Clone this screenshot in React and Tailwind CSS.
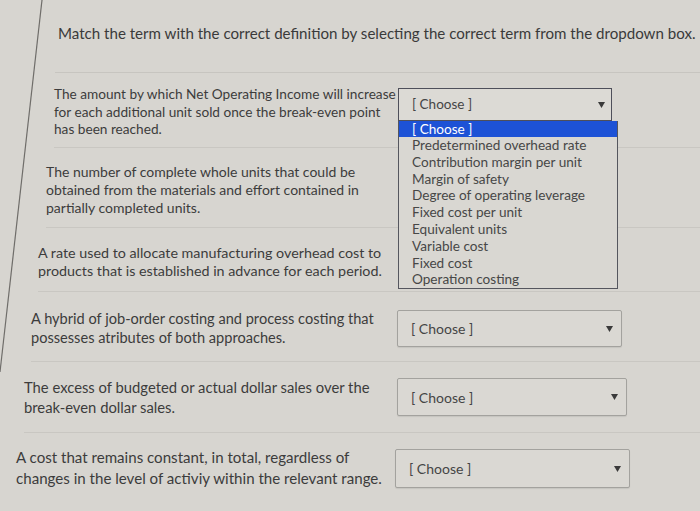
import React from "react";

const options = [
  "Predetermined overhead rate",
  "Contribution margin per unit",
  "Margin of safety",
  "Degree of operating leverage",
  "Fixed cost per unit",
  "Equivalent units",
  "Variable cost",
  "Fixed cost",
  "Operation costing",
];

const rows = [
  {
    lines: [
      "The amount by which Net Operating Income will increase",
      "for each additional unit sold once the break-even point",
      "has been reached.",
    ],
    ml: "ml-[54px]",
    h: "h-[75px]",
    pt: "pt-[13px]",
    tw: "w-[344px]",
    lead: "leading-[17.5px] text-[13.65px]",
    dd: "mt-[15px] w-[214px] h-[33px]",
    open: true,
  },
  {
    lines: [
      "The number of complete whole units that could be",
      "obtained from the materials and effort contained in",
      "partially completed units.",
    ],
    ml: "ml-[46px]",
    h: "h-[80px]",
    pt: "pt-[15px]",
    tw: "w-[352px]",
    lead: "leading-[18px] text-[14px]",
    hidden: true,
  },
  {
    lines: [
      "A rate used to allocate manufacturing overhead cost to",
      "products that is established in advance for each period.",
    ],
    ml: "ml-[38px]",
    h: "h-[64px]",
    pt: "pt-[16px]",
    tw: "w-[360px]",
    lead: "leading-[18px] text-[14.3px]",
    hidden: true,
  },
  {
    lines: [
      "A hybrid of job-order costing and process costing that",
      "possesses atributes of both approaches.",
    ],
    ml: "ml-[31px]",
    h: "h-[70px]",
    pt: "pt-[17px]",
    tw: "w-[366px]",
    lead: "leading-[19px] text-[14.6px]",
    dd: "mt-[18px] w-[225px] h-[37px]",
  },
  {
    lines: [
      "The excess of budgeted or actual dollar sales over the",
      "break-even dollar sales.",
    ],
    ml: "ml-[24px]",
    h: "h-[71px]",
    pt: "pt-[15px]",
    tw: "w-[373px]",
    lead: "leading-[20px] text-[14.8px]",
    dd: "mt-[16px] w-[230px] h-[38px]",
  },
  {
    lines: [
      "A cost that remains constant, in total, regardless of",
      "changes in the level of activiy within the relevant range.",
    ],
    ml: "ml-[16px]",
    h: "h-[90px]",
    pt: "pt-[14px]",
    tw: "w-[379px]",
    lead: "leading-[21px] text-[15.1px]",
    dd: "mt-[16px] w-[235px] h-[39px]",
  },
];

const Arrow = () => (
  <svg width="7" height="6" viewBox="0 0 7 6" className="shrink-0">
    <path d="M0 0 L7 0 L3.5 6 Z" fill="#3a3a3a" />
  </svg>
);

const Dropdown = ({ cls, open }) => (
  <div className={`relative shrink-0 ${cls}`}>
    <div
      className={
        open
          ? "h-full flex items-center justify-between pl-[13px] pr-[6px] border border-[#4e4f5a] bg-[#dcdad5]"
          : "h-full flex items-center justify-between pl-[13px] pr-[8px] border border-[#a3a29e] rounded-[2px] bg-[#dad8d3] shadow-[0_1px_1px_rgba(0,0,0,0.08)]"
      }
    >
      <span className={open ? "text-[13.5px] text-[#454545]" : "text-[14px] text-[#454545]"}>
        [ Choose ]
      </span>
      <Arrow />
    </div>
    {open && (
      <div className="absolute z-10 left-0 top-full w-[220px] border border-[#55565e] border-t-0 bg-[#d9d7d2] text-[13.6px] leading-[16.8px] text-[#474747]">
        <div className="bg-[#1d52d6] text-white pl-[13px] h-[16px] leading-[16px]">
          [ Choose ]
        </div>
        {options.map((o) => (
          <div key={o} className="pl-[13px] whitespace-nowrap">
            {o}
          </div>
        ))}
      </div>
    )}
  </div>
);

export default function App() {
  return (
    <div
      className="relative w-[700px] h-[511px] overflow-hidden bg-[#d7d5d0] text-[#3c3c3c]"
      style={{ fontFamily: "Lato, 'Open Sans', sans-serif" }}
    >
      <svg
        className="absolute inset-0 pointer-events-none"
        width="700"
        height="511"
      >
        <line x1="42" y1="0" x2="0" y2="372" stroke="#6f6d69" strokeWidth="1.2" />
      </svg>

      <div className="ml-[55px] h-[73px] border-b border-[#c7c5c0] pt-[23px] pl-[3px]">
        <h1 className="text-[15.1px] leading-[20px] whitespace-nowrap text-[#3a3a3a]">
          Match the term with the correct definition by selecting the correct term from the dropdown box.
        </h1>
      </div>

      {rows.map((r, i) => (
        <div
          key={i}
          className={`flex ${r.ml} ${r.h} border-b border-[#c9c7c2] ${
            r.open ? "relative z-10" : ""
          }`}
        >
          <div className={`${r.tw} shrink-0 ${r.pt} ${r.lead}`}>
            {r.lines.map((l) => (
              <div key={l} className="whitespace-nowrap">
                {l}
              </div>
            ))}
          </div>
          {!r.hidden && <Dropdown cls={r.dd} open={r.open} />}
        </div>
      ))}
    </div>
  );
}
